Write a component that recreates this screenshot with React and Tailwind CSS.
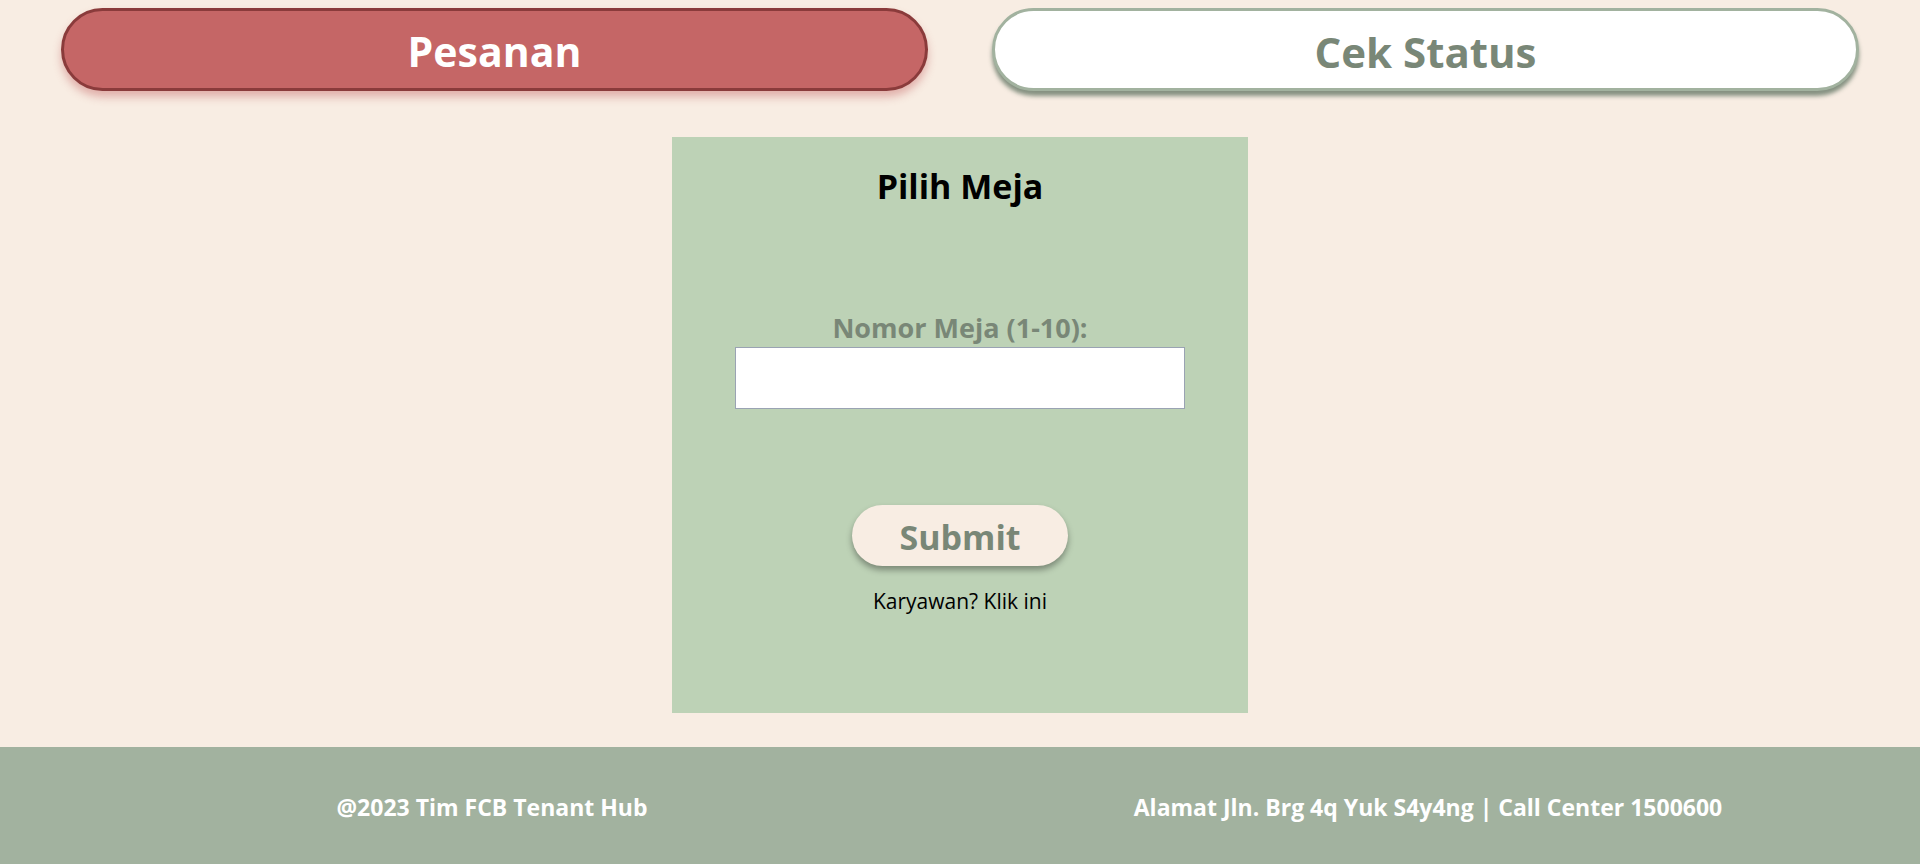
import React, { useState } from 'react';

export default function App() {
  const [meja, setMeja] = useState('');

  const font = { fontFamily: '"Open Sans", "Noto Sans", sans-serif' };

  return (
    <div className="w-full min-h-screen bg-[#F8EDE3] flex flex-col" style={font}>
      {/* Top tabs */}
      <div className="flex gap-16 px-[61px] pt-2">
        <button className="flex-1 h-[83px] pt-[4px] rounded-full bg-[#c56666] border-[3px] border-[#8a3b3b] text-white text-[41px] font-bold shadow-[0_6px_8px_rgba(197,102,102,0.45)]">
          Pesanan
        </button>
        <button className="flex-1 h-[83px] pt-[4px] rounded-full bg-white border-[3px] border-[#A2B29F] text-[#798777] text-[42px] font-bold shadow-[0_5px_4px_rgba(121,135,119,0.9)]">
          Cek Status
        </button>
      </div>

      {/* Card */}
      <div className="flex justify-center mt-[46px]">
        <div className="w-[576px] h-[576px] bg-[#BDD2B6] flex flex-col items-center pt-[29px]">
          <h1 className="text-[34px] font-bold text-black leading-[40px]">Pilih Meja</h1>
          <label className="mt-[107px] text-[27px] font-bold text-[#798777] leading-[30px]">
            Nomor Meja (1-10):
          </label>
          <input
            type="text"
            value={meja}
            onChange={e => setMeja(e.target.value)}
            className="mt-[4px] w-[450px] h-[62px] bg-white border border-[#9aa3b3] outline-none px-2"
          />
          <button className="mt-[96px] w-[216px] h-[61px] pt-[3px] rounded-full bg-[#F8EDE3] text-[#798777] text-[34px] font-bold shadow-[0_4px_6px_rgba(0,0,0,0.35)]">
            Submit
          </button>
          <a className="mt-[22px] text-[21px] text-black leading-[26px] cursor-pointer">Karyawan? Klik ini</a>
        </div>
      </div>

      {/* Footer */}
      <footer className="mt-[34px] h-[117px] bg-[#A2B29F] grid grid-cols-2 items-center px-6 pt-[4px] text-white text-[23px] font-bold text-center">
        <p>@2023 Tim FCB Tenant Hub</p>
        <p>Alamat Jln. Brg 4q Yuk S4y4ng | Call Center 1500600</p>
      </footer>
    </div>
  );
}
